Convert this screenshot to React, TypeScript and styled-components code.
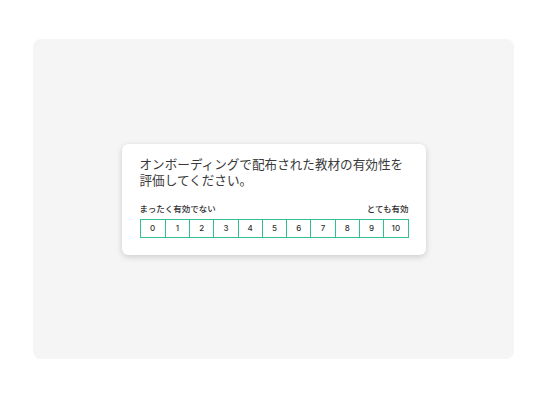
import React from "react";
import styled, { createGlobalStyle } from "styled-components";

const GlobalStyle = createGlobalStyle`
  html, body {
    margin: 0;
    padding: 0;
    background: #ffffff;
  }
  body {
    font-family: "Noto Sans CJK JP", "Noto Sans", sans-serif;
    color: #333333;
  }
`;

const Page = styled.div`
  width: 547px;
  height: 400px;
  box-sizing: border-box;
  padding: 39px 33px 41px 33px;
`;

const Stage = styled.div`
  height: 100%;
  background: #f5f5f5;
  border-radius: 8px;
  display: flex;
  align-items: center;
  justify-content: center;
`;

const Card = styled.div`
  width: 304px;
  box-sizing: border-box;
  padding: 12px 17px 17px 18px;
  background: #ffffff;
  border-radius: 6px;
  box-shadow: 0 2px 6px rgba(0, 0, 0, 0.16), 0 0 1px rgba(0, 0, 0, 0.08);
`;

const Question = styled.p`
  margin: 0;
  font-size: 12.6px;
  line-height: 16px;
  color: #3a3a3a;
  font-weight: 400;
  white-space: nowrap;
`;

const Labels = styled.div`
  margin-top: 15px;
  display: flex;
  justify-content: space-between;
  font-size: 8.5px;
  line-height: 11px;
  font-weight: 500;
  color: #2f2f2f;
`;

const Scale = styled.div`
  margin-top: 5px;
  display: grid;
  grid-template-columns: repeat(11, 1fr);
  border: 1px solid #34c08c;
`;

const Option = styled.button<{ $first: boolean }>`
  all: unset;
  height: 17px;
  display: flex;
  align-items: center;
  justify-content: center;
  border-left: ${(p) => (p.$first ? "none" : "1px solid #34c08c")};
  font-family: "Inter", "Noto Sans", sans-serif;
  font-size: 8px;
  font-weight: 500;
  color: #333333;
  cursor: pointer;
`;

export default function App() {
  const values = Array.from({ length: 11 }, (_, i) => i);
  return (
    <>
      <GlobalStyle />
      <Page>
        <Stage>
          <Card>
            <Question>
              オンボーディングで配布された教材の有効性を
              <br />
              評価してください。
            </Question>
            <Labels>
              <span>まったく有効でない</span>
              <span>とても有効</span>
            </Labels>
            <Scale>
              {values.map((v) => (
                <Option key={v} $first={v === 0}>
                  {v}
                </Option>
              ))}
            </Scale>
          </Card>
        </Stage>
      </Page>
    </>
  );
}
